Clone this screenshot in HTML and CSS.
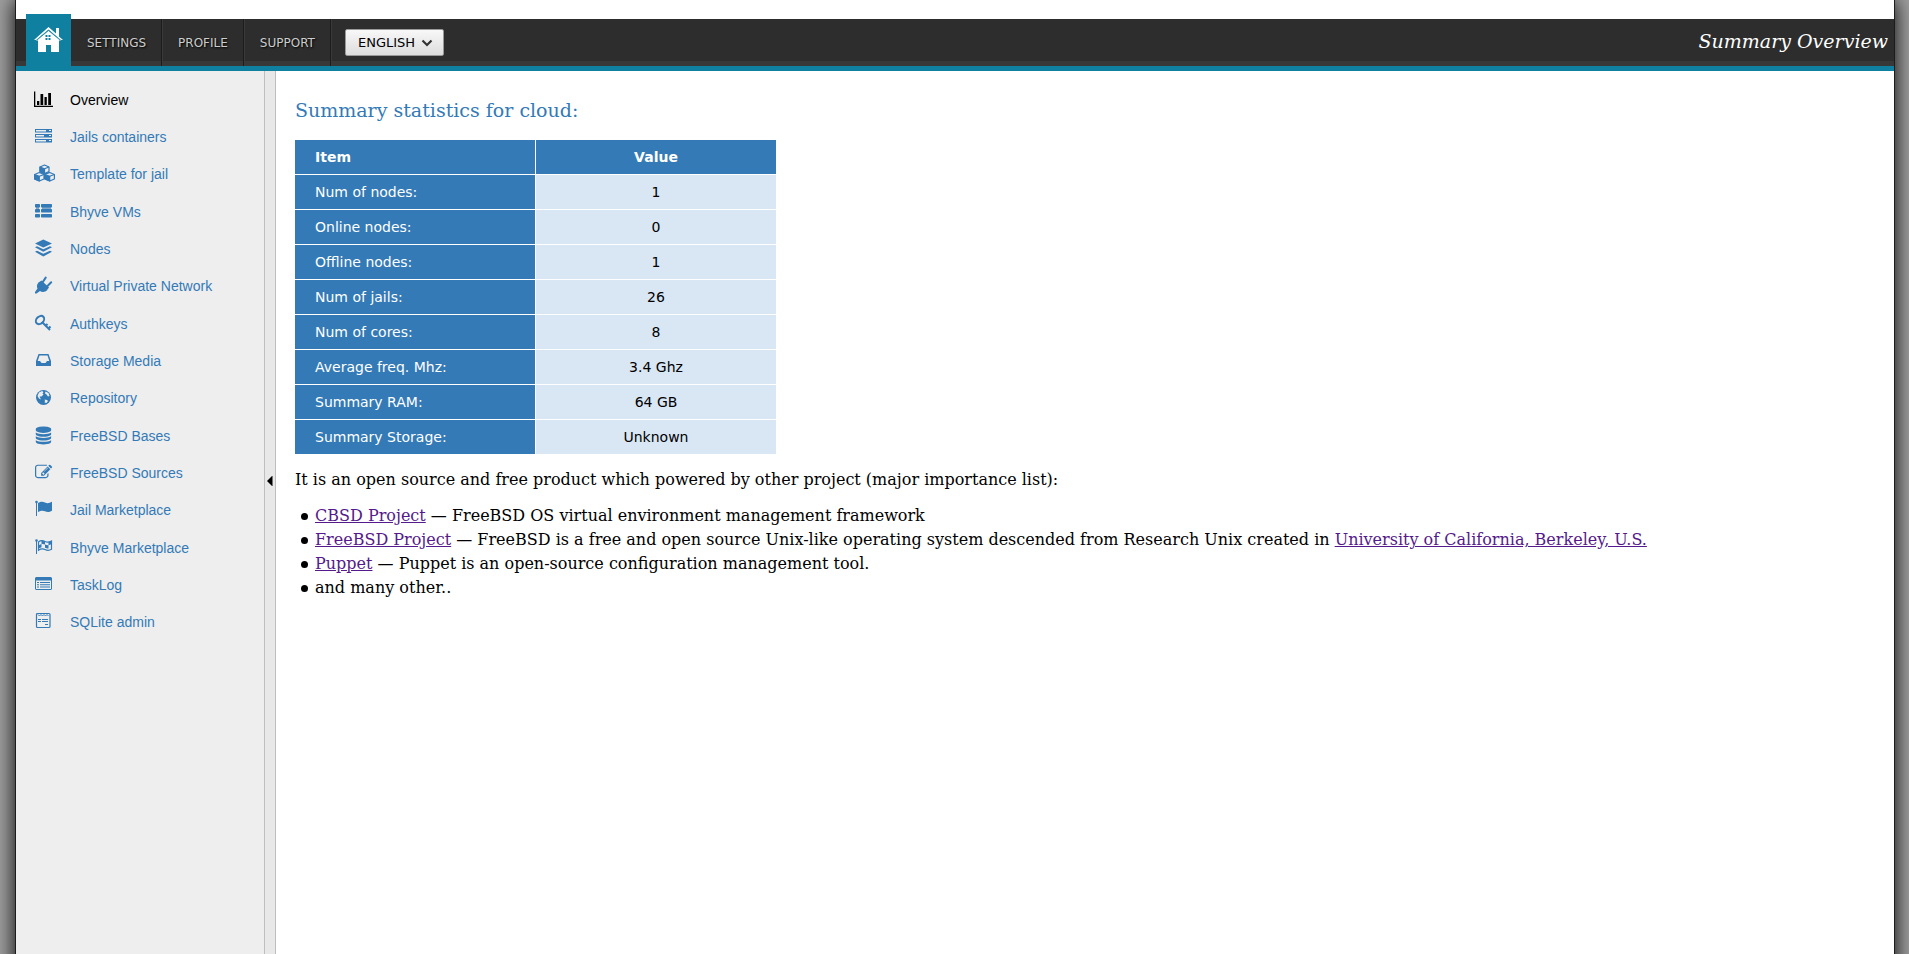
FILE: index.html
```html
<!DOCTYPE html>
<html lang="en">
<head>
<meta charset="utf-8">
<title>Summary Overview</title>
<link rel="stylesheet" href="styles.css">
</head>
<body>
<div class="page">
  <header class="topbar">
    <a class="home" href="#" aria-label="Home">
      <svg width="29" height="26" viewBox="0 0 29 26">
        <path fill="#fff" d="M14.500 0L22 6.500V1h3v8.500l4 3.500H27L14.500 2.500 2 13H0z"/>
        <path fill="#fff" fill-rule="evenodd" d="M14.500 3.500L27 13.500H25V25h-8v-7h-5v7H4V13.500H2zM11.500 8v2h2V8zM14.500 8v2h2V8zM11.500 11v2h2v-2zM14.500 11v2h2v-2z"/>
        <path fill="none" stroke="#1080a0" stroke-width=".8" d="M3 13L14.500 3.500 26 13"/>
      </svg>
    </a>
    <nav class="topnav">
      <a href="#">SETTINGS</a>
      <a href="#">PROFILE</a>
      <a href="#">SUPPORT</a>
    </nav>
    <div class="lang">
      <select class="lang-select" aria-label="Language"><option>ENGLISH</option></select>
      <svg class="lang-arrow" width="12" height="8" viewBox="0 0 12 8"><path d="M1.500 1.500L6 6l4.500-4.500" fill="none" stroke="#333" stroke-width="2.200"/></svg>
    </div>
    <div class="title">Summary Overview</div>
  </header>
  <div class="main">
    <nav class="sidebar">
      <ul class="menu">
        <li><a class="active" href="#"><svg class="icon" viewBox="0 0 22 20"><path d="M1 1.500h1.300V15.700H20V17H1zM4 11h2.300v4H4zM7.500 4h2.700v11H7.500zM11.500 7h2.300v8h-2.300zM15.200 3H18v12h-2.800z"/></svg>Overview</a></li>
        <li><a href="#"><svg class="icon" viewBox="0 0 22 20"><path fill-rule="evenodd" d="M2 2h17v3.500H2zM3 3v1.500h10V3zM16 3v1h2V3zM2 7h17v3.500H2zM3 8v1.500h8V8zM16 8v1h2V8zM2 12h17v3.500H2zM3 13v1.500h10V13zM16 13v1h2v-1z"/></svg>Jails containers</a></li>
        <li><a href="#"><svg class="icon" viewBox="0 0 22 20"><g stroke="#337ab7" stroke-width="1.200" stroke-linejoin="round"><path fill="#eee" d="M11.500 1l4.500 2v4.500l-4.500 2L7 7.500V3zM6.300 8.500l4.700 2V15l-4.700 2-4.700-2v-4.500zM16.700 8.500l4.700 2V15l-4.700 2-4.700-2v-4.500z"/><path d="M7 3l4.500 1.800v4.700L7 7.500zM1.600 10.500l4.700 1.800V17l-4.700-2zM12 10.500l4.700 1.800V17L12 15z"/><path fill="none" d="M11.500 4.800L16 3M6.300 12.300l4.700-1.800M16.700 12.300l4.700-1.800"/></g></svg>Template for jail</a></li>
        <li><a href="#"><svg class="icon" viewBox="0 0 22 20"><rect x="2" y="2" width="5" height="3.500" rx=".7"/><rect x="2" y="7" width="5" height="3.500" rx=".7"/><rect x="2" y="12" width="5" height="3.500" rx=".7"/><rect x="8" y="2" width="11" height="3.500" rx=".7"/><rect x="8" y="7" width="11" height="3.500" rx=".7"/><rect x="8" y="12" width="11" height="3.500" rx=".7"/><path opacity=".6" d="M3 5h3v2H3zM9 5h9v2H9z"/></svg>Bhyve VMs</a></li>
        <li><a href="#"><svg class="icon" viewBox="0 0 22 20"><path d="M10.300.5L19 4.500l-8.700 4-8.300-4zM2 8.200l2-1 6.300 3 6.700-3 2 1-8.700 4.600zM2 12.800l2-1 6.300 3 6.700-3 2 1-8.700 4.700z"/></svg>Nodes</a></li>
        <li><a href="#"><svg class="icon" viewBox="0 0 22 20"><path d="M5.500 6.500L14.500 14c-2.500 2.300-5.500 2.300-7.500 1L3.500 17.500H2V16l2.500-3.500c-1-2-.7-4 1-6z"/><path d="M5.500 6.500l3-2 7.500 7-2 2.500c-3 1-8-3-8.500-7.500z"/><path fill="none" stroke="#337ab7" stroke-width="2" stroke-linecap="round" d="M9.500 6.500L12.700 1.600M14 10.500l4.200-4.200"/></svg>Virtual Private Network</a></li>
        <li><a href="#"><svg class="icon" viewBox="0 0 22 20"><ellipse cx="7" cy="6" rx="4.700" ry="3.500" transform="rotate(-45 7 6)" fill="none" stroke="#337ab7" stroke-width="2"/><path fill="none" stroke="#337ab7" stroke-width="2" d="M9 8l8 8M12 12.500l2.500-2.500M15 15l2.500-2.500"/></svg>Authkeys</a></li>
        <li><a href="#"><svg class="icon" viewBox="0 0 22 20"><path fill-rule="evenodd" d="M5.500 3h10L18 10v5H3v-5zM6.500 4.500L4.700 10H7l1.500 2h4l1.500-2h2.300l-1.800-5.500z"/></svg>Storage Media</a></li>
        <li><a href="#"><svg class="icon" viewBox="0 0 22 20"><circle cx="10.500" cy="9.500" r="7.500"/><path fill="#eee" d="M6 4.500L9 3l1.500 1-1 1.500 1 1-2 2H6.500L8 11.500l-2-1-1.500-2.500zM12.500 3.500l3 1.500L16.500 8l-1.500.5-1.500-2-1.500-1zM11.500 11.500l2.500.5 1 1-1.500 2-2-.5.500-1.500z"/></svg>Repository</a></li>
        <li><a href="#"><svg class="icon" viewBox="0 0 22 20"><g transform="translate(1.500 .5) scale(.01)"><path d="M896 768q237 0 443-43t325-127v170q0 69-103 128t-280 93.500-385 34.500-385-34.500-280-93.500-103-128v-170q119 84 325 127t443 43zm0 768q237 0 443-43t325-127v170q0 69-103 128t-280 93.500-385 34.500-385-34.500-280-93.500-103-128v-170q119 84 325 127t443 43zm0-384q237 0 443-43t325-127v170q0 69-103 128t-280 93.500-385 34.500-385-34.500-280-93.500-103-128v-170q119 84 325 127t443 43zm0-1152q208 0 385 34.500t280 93.500 103 128v128q0 69-103 128t-280 93.500-385 34.500-385-34.500-280-93.500-103-128v-128q0-69 103-128t280-93.500 385-34.500z"/></g></svg>FreeBSD Bases</a></li>
        <li><a href="#"><svg class="icon" viewBox="0 0 22 20"><g transform="translate(2 .4) scale(.0096)"><path d="M888 1184l116-116-152-152-116 116v56h96v96h56zm440-720q-16-16-33 1l-350 350q-17 17-1 33t33-1l350-350q17-17 1-33zm80 594v190q0 119-84.500 203.500t-203.500 84.500h-832q-119 0-203.500-84.500t-84.500-203.500v-832q0-119 84.500-203.500t203.500-84.500h832q63 0 117 25 15 7 18 23 3 17-9 29l-49 49q-14 14-32 8-23-6-45-6h-832q-66 0-113 47t-47 113v832q0 66 47 113t113 47h832q66 0 113-47t47-113v-126q0-13 9-22l64-64q15-15 35-7t20 29zm-96-738l288 288-672 672h-288v-288zm444 132l-92 92-288-288 92-92q28-28 68-28t68 28l152 152q28 28 28 68t-28 68z"/></g></svg>FreeBSD Sources</a></li>
        <li><a href="#"><svg class="icon" viewBox="0 0 22 20"><circle cx="3.500" cy="2" r="1.300"/><path d="M3 2h1v14H3zM5 3c3-2 5-1.500 7-.5s4 1 7-.7v9c-3 1.700-5 1.500-7 .5s-4-1-7 .8z"/></svg>Jail Marketplace</a></li>
        <li><a href="#"><svg class="icon" viewBox="0 0 22 20"><circle cx="3.500" cy="2.500" r="1.300"/><path d="M3 2.500h1V16H3z"/><path fill="none" stroke="#337ab7" stroke-width="1.200" d="M5.500 4c2.500-2 4.500-1.500 6.500-.5s4 1 6.500-.5v8.300c-2.500 1.500-4.500 1.200-6.500.2s-4-1-6.500.7z"/><path d="M8.500 2.500l3.500 1v3c-1.500-.7-2.500-.7-3.500-.4zM15.500 4l3-1v3.300l-3 1zM5.500 7.200l3-1.100v3.200l-3 1.200zM12 6.500c1 .6 2.300.8 3.500.8v3.200c-1.500 0-2.500-.2-3.500-.7z"/></svg>Bhyve Marketplace</a></li>
        <li><a href="#"><svg class="icon" viewBox="0 0 22 20"><path fill-rule="evenodd" d="M3 2h15l1 1v11l-1 1H3l-1-1V3zM3 5.500V14h15V5.500zM4 7h2v1H4zM7 7h10v1H7zM4 9.200h2v1H4zM7 9.200h10v1H7zM4 11.500h2v1H4zM7 11.500h10v1H7z"/></svg>TaskLog</a></li>
        <li><a href="#"><svg class="icon" viewBox="0 0 22 20"><rect x="3.500" y="1.500" width="13.500" height="14" rx="1" fill="none" stroke="#337ab7" stroke-width="1.200"/><path fill="none" stroke="#337ab7" d="M5 2.500L6.500 4 8 2.500 9.500 4 11 2.500 12.500 4 14 2.500 15.500 4M5 7.500h3M9 7.500h6M5 9.500h3M9 9.500h6M12 12.500h3"/></svg>SQLite admin</a></li>
      </ul>
    </nav>
    <button class="splitter" type="button" aria-label="Collapse menu"><svg width="6" height="10" viewBox="0 0 6 10"><path d="M0 5l5-5h.5v10H5z"/></svg></button>
    <main class="content">
      <h1>Summary statistics for cloud:</h1>
      <table class="stats">
        <thead><tr><th class="item" scope="col">Item</th><th scope="col">Value</th></tr></thead>
        <tbody>
          <tr><td>Num of nodes:</td><td>1</td></tr>
          <tr><td>Online nodes:</td><td>0</td></tr>
          <tr><td>Offline nodes:</td><td>1</td></tr>
          <tr><td>Num of jails:</td><td>26</td></tr>
          <tr><td>Num of cores:</td><td>8</td></tr>
          <tr><td>Average freq. Mhz:</td><td>3.4 Ghz</td></tr>
          <tr><td>Summary RAM:</td><td>64 GB</td></tr>
          <tr><td>Summary Storage:</td><td>Unknown</td></tr>
        </tbody>
      </table>
      <p>It is an open source and free product which powered by other project (major importance list):</p>
      <ul class="projects">
        <li><a href="#">CBSD Project</a> — FreeBSD OS virtual environment management framework</li>
        <li><a href="#">FreeBSD Project</a> — FreeBSD is a free and open source Unix-like operating system descended from Research Unix created in <a href="#">University of California, Berkeley, U.S.</a></li>
        <li><a href="#">Puppet</a> — Puppet is an open-source configuration management tool.</li>
        <li>and many other..</li>
      </ul>
    </main>
  </div>
</div>
</body>
</html>
```

FILE: styles.css
```css
* { box-sizing: border-box; }

body {
  margin: 0;
  height: 100vh;
  overflow: hidden;
  background: #a0a0a0;
  color: #000;
  font: 16px/24px "DejaVu Serif", serif;
}

.page {
  display: flex;
  flex-direction: column;
  min-height: calc(100vh + 24px);
  margin: 0 14px 0 15px;
  padding-top: 19px;
  border: 1px solid #1c1c1c;
  border-width: 0 1px;
  background: #fff;
  box-shadow: 0 0 20px #000;
}

.topbar {
  display: flex;
  height: 52px;
  padding: 0 6px 0 10px;
  border-bottom: 5px solid #1080a0;
  background: linear-gradient(to top, #383838 5px, #2d2d2d 5px);
}

.home {
  display: flex;
  align-items: center;
  justify-content: center;
  width: 45px;
  margin-top: -5px;
  background: #1080a0;
}

.topnav { display: flex; }

.topnav a {
  display: flex;
  align-items: center;
  padding: 0 15px 0 16px;
  border-right: 1px solid #1c1c1c;
  box-shadow: 1px 0 #3a3a3a;
  color: #ccc;
  font: 12px "DejaVu Sans", sans-serif;
  text-decoration: none;
  text-shadow: 1px 1px 2px #000;
}

.lang {
  position: relative;
  align-self: center;
  margin-left: 14px;
  padding-bottom: 1px;
}

.lang-select {
  appearance: none;
  width: 99px;
  height: 27px;
  padding: 0 12px;
  border: 1px solid #999;
  border-radius: 2px;
  background: linear-gradient(#f8f8f8, #ddd);
  color: #000;
  font: 13px "DejaVu Sans", sans-serif;
}

.lang-arrow {
  position: absolute;
  top: 10px;
  right: 11px;
  pointer-events: none;
}

.title {
  align-self: center;
  margin-left: auto;
  padding-bottom: 3px;
  color: #fff;
  font-size: 19px;
  font-style: italic;
}

.main {
  display: flex;
  flex: 1;
}

.sidebar {
  width: 248px;
  flex: none;
  padding-top: 10px;
  background: #eee;
}

.menu {
  display: grid;
  grid-auto-rows: 1fr;
  height: 560px;
  margin: 0;
  padding: 0;
  list-style: none;
}

.menu a {
  display: flex;
  align-items: center;
  gap: 15px;
  height: 100%;
  padding-left: 17px;
  color: #337ab7;
  font: 14px "Liberation Sans", Arial, sans-serif;
  text-decoration: none;
}

.menu .active { color: #000; }

.icon {
  width: 22px;
  height: 20px;
  flex: none;
  fill: currentColor;
}

.splitter {
  display: flex;
  align-items: flex-start;
  width: 12px;
  flex: none;
  padding: 405px 0 0 2px;
  border: 1px solid #bebebe;
  border-width: 0 1px;
  background: #e8e8e8;
}

.content {
  flex: 1;
  padding: 27px 19px;
}

h1 {
  margin: 0 0 18px;
  color: #337ab7;
  font-size: 19px;
  font-weight: normal;
  line-height: 24px;
}

.stats {
  width: 481px;
  table-layout: fixed;
  border-collapse: separate;
  border-spacing: 0;
  font: 14px/20px "DejaVu Sans", sans-serif;
}

.stats .item { width: 240px; }

.stats th,
.stats td {
  padding: 7px 20px;
  border-bottom: 1px solid #fff;
  background: #337ab7;
  color: #fff;
  text-align: left;
}

.stats th + th,
.stats td + td {
  border-left: 1px solid #fff;
  text-align: center;
}

.stats td + td {
  background: #d9e6f3;
  color: #000;
}

p { margin: 13px 0 12px; }

.projects {
  margin: 0;
  padding-left: 20px;
  list-style: none;
}

.projects li { position: relative; }

.projects li::before {
  content: "";
  position: absolute;
  top: 9px;
  left: -14px;
  width: 7px;
  height: 7px;
  border-radius: 50%;
  background: #000;
}

.projects a { color: #551a8b; }
```
